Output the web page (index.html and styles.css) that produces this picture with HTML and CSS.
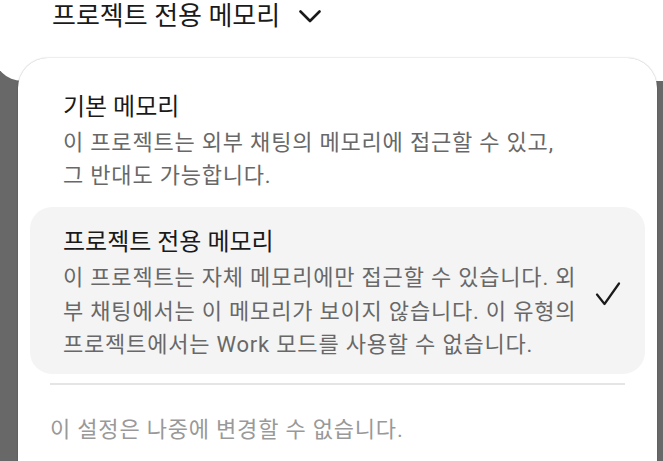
FILE: index.html
```html
<!DOCTYPE html>
<html lang="ko">
<head>
<meta charset="utf-8">
<title>프로젝트 전용 메모리</title>
<link rel="stylesheet" href="styles.css">
</head>
<body>
<header class="top-panel">
  <div class="top-title">
    <span>프로젝트 전용 메모리</span>
    <svg class="chevron" width="22" height="13" viewBox="0 0 22 13" aria-hidden="true">
      <polyline points="1.5,1.5 11,11 20.5,1.5" fill="none" stroke="#1a1a1a" stroke-width="2.6" stroke-linecap="round" stroke-linejoin="round"/>
    </svg>
  </div>
</header>
<section class="sheet">
  <div class="option">
    <div class="option-text">
      <div class="option-title">기본 메모리</div>
      <div class="option-desc">이 프로젝트는 외부 채팅의 메모리에 접근할 수 있고,<br>그 반대도 가능합니다.</div>
    </div>
  </div>
  <div class="option selected">
    <div class="option-text">
      <div class="option-title">프로젝트 전용 메모리</div>
      <div class="option-desc">이 프로젝트는 자체 메모리에만 접근할 수 있습니다. 외<br>부 채팅에서는 이 메모리가 보이지 않습니다. 이 유형의<br>프로젝트에서는 Work 모드를 사용할 수 없습니다.</div>
    </div>
    <svg class="check" width="26" height="24" viewBox="0 0 26 24" aria-hidden="true">
      <polyline points="2,12.5 9.5,22 24,1.5" fill="none" stroke="#1a1a1a" stroke-width="2.2" stroke-linecap="round" stroke-linejoin="round"/>
    </svg>
  </div>
  <div class="divider"></div>
  <p class="note">이 설정은 나중에 변경할 수 없습니다.</p>
</section>
</body>
</html>
```
FILE: styles.css
```css
html, body {
  margin: 0;
  padding: 0;
}
body {
  background: #686868;
  font-family: Roboto, "Noto Sans CJK KR", sans-serif;
  overflow: hidden;
  height: 461px;
}
.top-panel {
  background: #ffffff;
  margin-left: -6px;
  margin-right: -30px;
  height: 81px;
  border-radius: 0 0 28px 28px;
  padding-left: 58px;
  box-sizing: border-box;
}
.top-title {
  display: flex;
  align-items: center;
  gap: 19px;
  font-size: 26px;
  line-height: 32px;
  color: #1a1a1a;
}
.chevron {
  display: block;
  margin-top: 1px;
}
.sheet {
  background: #ffffff;
  margin: -23px 6px 0 18px;
  border-radius: 30px;
  box-shadow: 0 0 1.5px rgba(0, 0, 0, 0.35);
  padding: 13.5px 12px 40px;
  height: 520px;
  box-sizing: border-box;
  display: flex;
  flex-direction: column;
  gap: 2.5px;
}
.option {
  display: flex;
  align-items: center;
  padding: 19px 24px 12px 33px;
  border-radius: 22px;
}
.option.selected {
  background: #f4f4f4;
}
.option-text {
  flex: 1;
}
.option-title {
  font-size: 24px;
  line-height: 32px;
  color: #1a1a1a;
  margin-bottom: 3px;
}
.option-desc {
  font-size: 22px;
  letter-spacing: 0.8px;
  line-height: 33.5px;
  color: #686868;
}
.check {
  display: block;
  flex: none;
}
.divider {
  height: 2px;
  background: #e5e5e5;
  margin: 6.5px 20px 0;
}
.note {
  margin: 28px 0 0 20px;
  font-size: 22px;
  letter-spacing: 0.8px;
  line-height: 30px;
  color: #999999;
}
```
